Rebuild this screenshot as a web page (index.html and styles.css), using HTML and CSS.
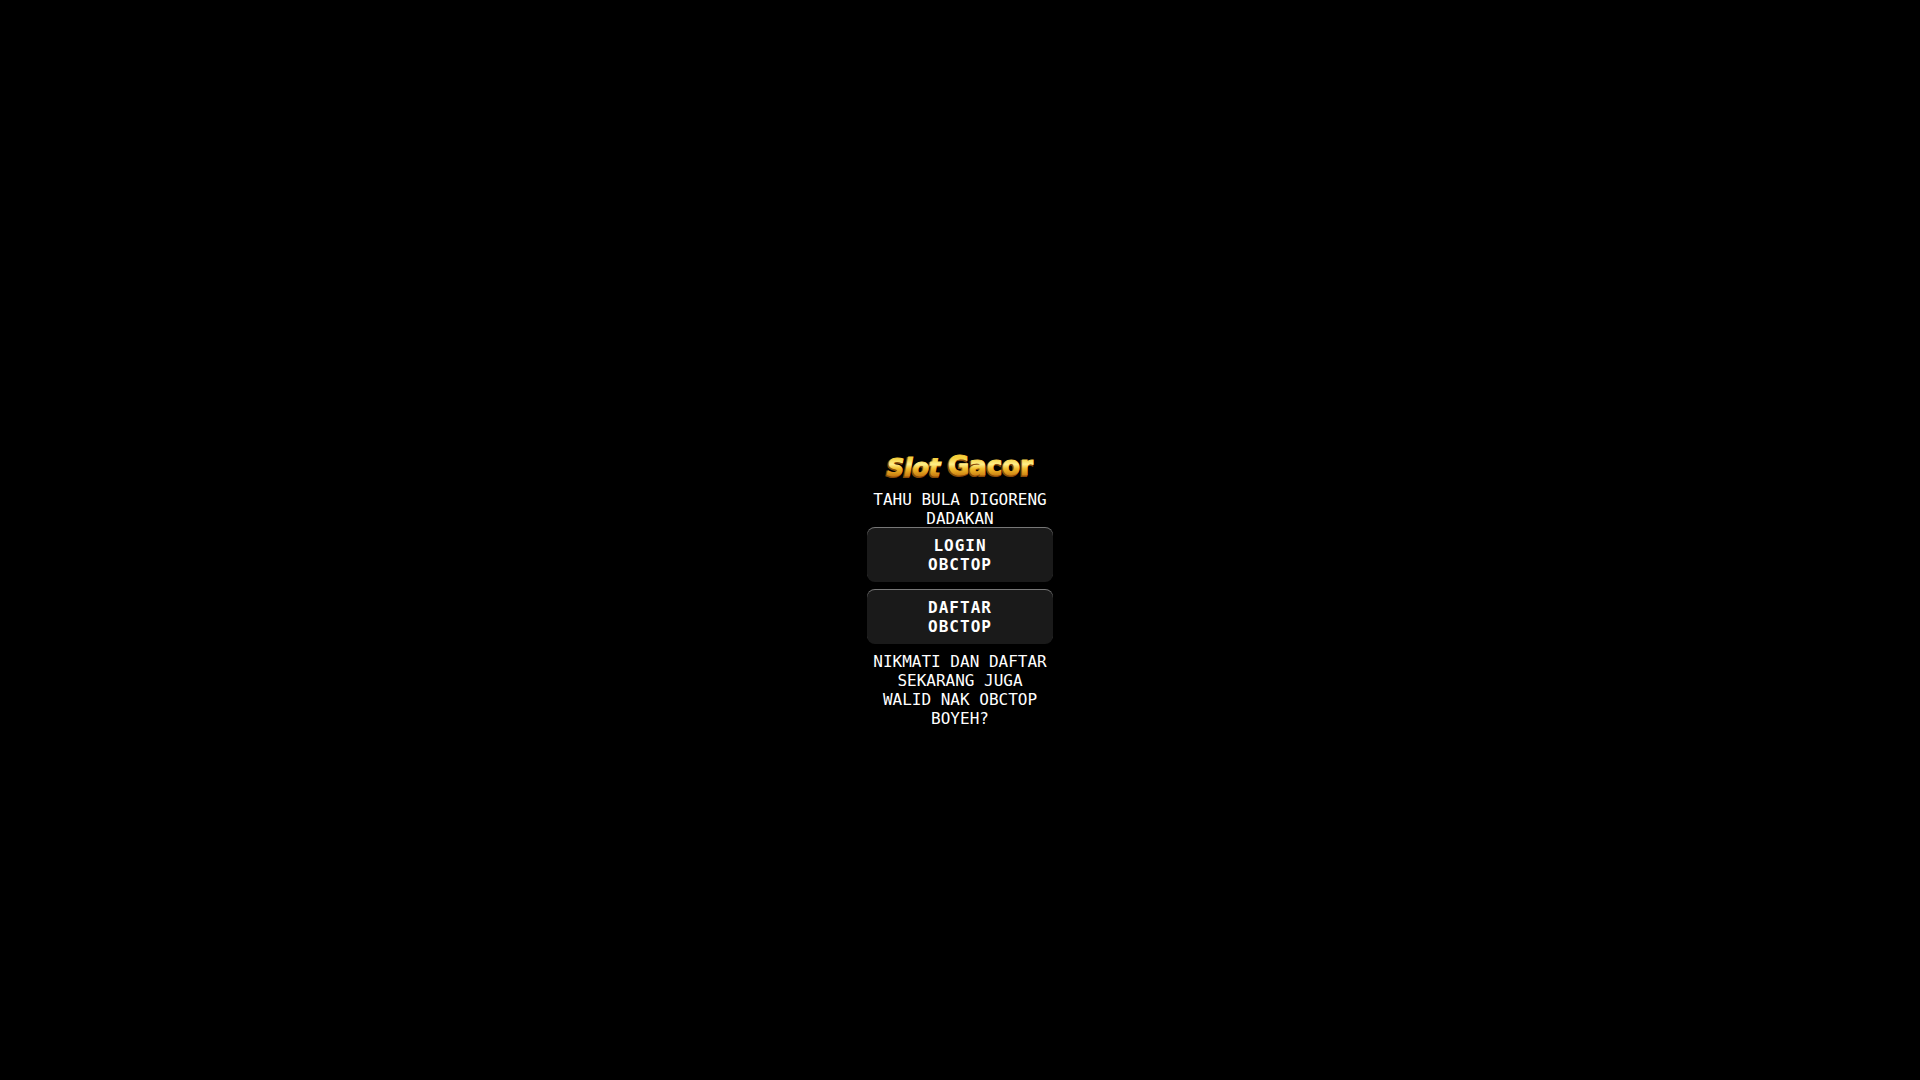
FILE: index.html
```html
<!DOCTYPE html>
<html lang="id">
<head>
  <meta charset="utf-8">
  <meta name="viewport" content="width=device-width, initial-scale=1">
  <title>OBCTOP</title>
  <link rel="stylesheet" href="styles.css">
</head>
<body>
  <main class="container">
    <svg class="logo" viewBox="0 0 186 34" role="img" aria-label="Slot Gacor">
      <defs>
        <linearGradient id="gold" gradientUnits="userSpaceOnUse" x1="0" y1="6" x2="0" y2="24">
          <stop offset="0" stop-color="#f5cf3a"/>
          <stop offset="0.35" stop-color="#fff08a"/>
          <stop offset="0.6" stop-color="#f2bd2c"/>
          <stop offset="1" stop-color="#c97c10"/>
        </linearGradient>
      </defs>
      <g class="logo-shadow">
        <text class="logo-slot" x="19" y="25">Slot</text>
        <text class="logo-gacor" x="80" y="24">Gacor</text>
      </g>
      <g class="logo-face">
        <text class="logo-slot" x="20" y="24">Slot</text>
        <text class="logo-gacor" x="81" y="23">Gacor</text>
      </g>
    </svg>
    <p>TAHU BULA DIGORENG DADAKAN</p>
    <nav class="links">
      <a class="btn" href="#login">LOGIN OBCTOP</a>
      <a class="btn" href="#daftar">DAFTAR OBCTOP</a>
    </nav>
    <p>NIKMATI DAN DAFTAR SEKARANG JUGA<br>WALID NAK OBCTOP BOYEH?</p>
  </main>
</body>
</html>
```
FILE: styles.css
```css
* {
  margin: 0;
  padding: 0;
  box-sizing: border-box;
}

body {
  min-height: 100vh;
  display: flex;
  align-items: center;
  justify-content: center;
  background: #000;
  color: #fff;
  font-family: "DejaVu Sans Mono", monospace;
  font-size: 16px;
  line-height: 19px;
  text-align: center;
}

.container {
  width: 100%;
  max-width: 186px;
  padding-top: 100px;
}

.logo {
  display: block;
  width: 100%;
  margin-bottom: 4px;
}

.logo text {
  font-family: "DejaVu Sans", sans-serif;
  font-weight: bold;
}

.logo-slot {
  font-size: 24px;
  font-style: italic;
}

.logo-gacor {
  font-size: 26px;
}

.logo-shadow {
  fill: #8a4a08;
  stroke: #8a4a08;
  stroke-width: 2;
}

.logo-face {
  fill: url(#gold);
  stroke: url(#gold);
  stroke-width: 1;
}

.links {
  display: flex;
  flex-direction: column;
  gap: 8px;
  margin-bottom: 8px;
}

.btn {
  padding: 8px 32px;
  border-radius: 8px;
  background: #1a1a1a;
  box-shadow: 0 -1px 0 #777;
  color: #fff;
  font-weight: bold;
  letter-spacing: 1px;
  text-decoration: none;
}
```
